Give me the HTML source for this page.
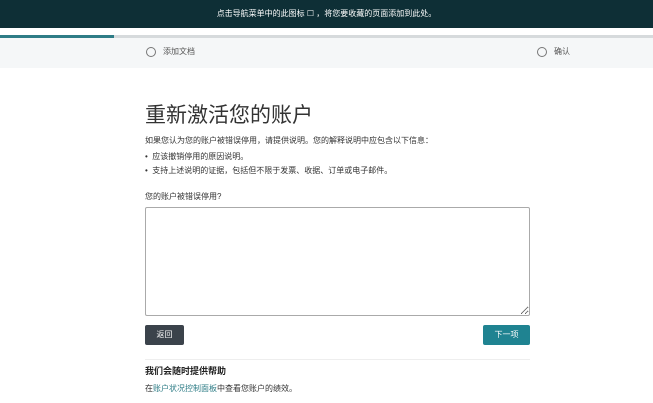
<!DOCTYPE html>
<html><head><meta charset="utf-8"><style>
*{margin:0;padding:0;box-sizing:border-box}
body{width:653px;height:403px;overflow:hidden;background:#fff;font-family:"Liberation Sans","Noto Sans CJK SC",sans-serif;color:#333;position:relative}
.top{position:absolute;left:0;top:0;width:653px;height:28px;background:#0e2f36;color:#fff;font-size:8px;text-align:center;line-height:28px}
.bar{position:absolute;left:0;top:35px;width:653px;height:3px;background:#d6dadc}
.bar i{position:absolute;left:0;top:0;width:114px;height:3px;background:#2e7c86}
.steps{position:absolute;left:0;top:38px;width:653px;height:30px;background:#f5f7f8;font-size:8px;color:#555}
.st{position:absolute;top:8px;display:flex;align-items:center}
.st span{width:10px;height:10px;border:1px solid #777;border-radius:50%;margin-right:7px;display:inline-block}
.abs{position:absolute}
h1{position:absolute;left:145px;top:99px;font-size:21px;font-weight:normal;color:#333}
.p{font-size:8px;color:#333}
ul{list-style:none}
textarea{position:absolute;left:145px;top:207px;width:385px;height:109px;border:1px solid #aaa;border-radius:2px;background:#fff}
.btn{position:absolute;height:20px;line-height:20px;font-size:8px;color:#fff;border-radius:2px;text-align:center}
</style></head><body>
<div class="top">点击导航菜单中的此图标 ☐ ，将您要收藏的页面添加到此处。</div>
<div class="bar"><i></i></div>
<div class="steps">
<div class="st" style="left:146px"><span></span>添加文档</div>
<div class="st" style="left:537px"><span></span>确认</div>
</div>
<h1>重新激活您的账户</h1>
<div class="abs p" style="left:145px;top:135px">如果您认为您的账户被错误停用，请提供说明。您的解释说明中应包含以下信息：</div>
<div class="abs p" style="left:145px;top:151px">•&nbsp; 应该撤销停用的原因说明。</div>
<div class="abs p" style="left:145px;top:165px">•&nbsp; 支持上述说明的证据，包括但不限于发票、收据、订单或电子邮件。</div>
<div class="abs p" style="left:145px;top:191px">您的账户被错误停用?</div>
<textarea></textarea>
<div class="btn" style="left:145px;top:325px;width:39px;background:#3b434b">返回</div>
<div class="btn" style="left:483px;top:325px;width:47px;background:#1f8391">下一项</div>
<div class="abs" style="left:145px;top:359px;width:385px;height:1px;background:#eee"></div>
<div class="abs" style="left:145px;top:364px;font-size:9px;font-weight:bold;color:#222">我们会随时提供帮助</div>
<div class="abs p" style="left:145px;top:383px">在<span style="color:#2e7c86">账户状况控制面板</span>中查看您账户的绩效。</div>
</body></html>
